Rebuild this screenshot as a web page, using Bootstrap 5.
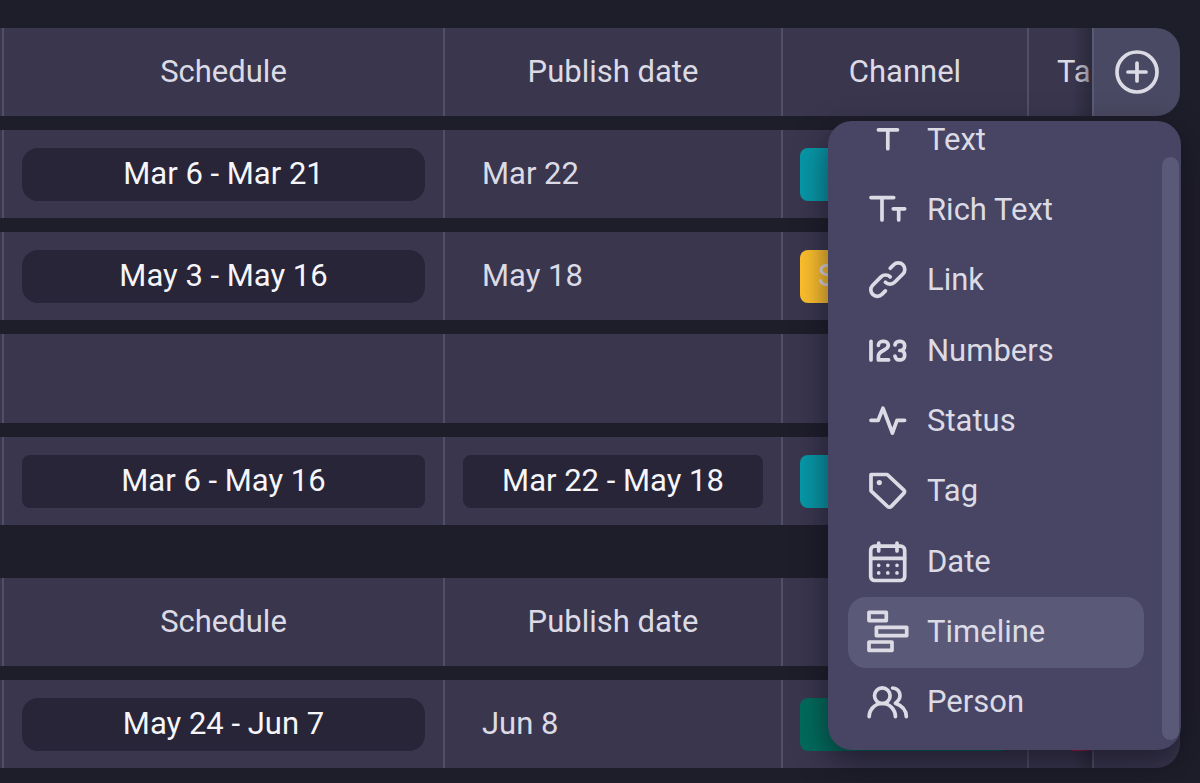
<!DOCTYPE html>
<html lang="en">
<head>
<meta charset="utf-8">
<meta name="viewport" content="width=device-width, initial-scale=1">
<title>Board</title>
<link href="https://cdn.jsdelivr.net/npm/bootstrap@5.3.0/dist/css/bootstrap.min.css" rel="stylesheet">
<style>
  body { background: #1e1d2a; color: #dcdbe5; font-family: Roboto, sans-serif; font-size: 31px; line-height: 36px; overflow-x: hidden; }
  .board { padding: 14px 20px 0 0; }
  .grid { width: 100%; table-layout: fixed; border-collapse: separate; border-spacing: 0 14px; }
  .grid + .grid { margin-top: 25px; }
  .grid th, .grid td { height: 88px; padding: 0 18px; background: #39364e; border-left: 2px solid #504e68; font-weight: 400; vertical-align: middle; white-space: nowrap; }
  .grid tr > :first-child { border-left: 0; padding: 0; }
  .grid .blank-row td { height: 89px; }
  .grid th { text-align: center; }
  .grid .plain { padding-left: 37px; }
  .c-edge { width: 2px; }
  .c-date { width: 338px; }
  .c-chan { width: 246px; }
  .c-tags { width: 65px; }
  .c-add { width: 88px; }
  .grid .under { position: relative; overflow: hidden; text-align: left; padding: 0 0 0 28px; }
  .grid .under::after { content: ""; position: absolute; inset: 0 0 0 auto; width: 20px; background: linear-gradient(to right, rgba(30,29,42,0), rgba(30,29,42,.5)); }
  .grid .pinned { position: relative; padding: 0; }
  .grid thead .pinned { background: #4a4963; border-color: #5b5a73; border-radius: 0 24px 24px 0; }
  .grid tbody .pinned { border-radius: 0 24px 24px 0; }
  .span-pill { height: 53px; line-height: 52px; border-radius: 16px; background: #272537; color: #f5f5fa; text-align: center; }
  .span-pill.total { border-radius: 8px; }
  .label-pill { height: 53px; line-height: 52px; border-radius: 8px; margin: 0 0 0 -1px; padding-left: 18px; }
  .teal { background: #0797a7; }
  .amber { background: #fcbf2d; }
  .green { background: #006b5b; }
  .red { background: #d31148; }
  .under .label-pill { margin-left: 9px; border-radius: 8px 0 0 8px; }
  .add-btn { height: 88px; color: #dcdbe5; }
  .type-menu { --bs-dropdown-bg: #474563; position: absolute; z-index: 10; top: calc(100% + 5px); right: -1px; width: 353px; height: 629px; padding: 0 37px 12px 20px; border: 0; border-radius: 24px; overflow: hidden; box-shadow: 0 12px 32px rgba(15,13,25,.6); color: #dcdbe5; font-size: 31px; }
  .type-list { height: 633px; flex: none; }
  .type-item { padding: 0 19px 1px; gap: 18px; border-radius: 18px; color: #dcdbe5; height: 100%; }
  .type-item:hover, .type-item.chosen { background: #5a5977; color: #dcdbe5; }
  .type-item svg { width: 42px; height: 42px; flex: none; overflow: visible; }
  .line-icon { fill: none; stroke: currentColor; stroke-width: 3.7; stroke-linecap: round; stroke-linejoin: round; }
  .scroll-thumb { position: absolute; top: 36px; right: 2px; bottom: 10px; width: 17px; border-radius: 9px; background: #5a5977; }
</style>
</head>
<body>
<main class="board">
  <table class="grid">
    <colgroup><col class="c-edge"><col><col class="c-date"><col class="c-chan"><col class="c-tags"><col class="c-add"></colgroup>
    <thead>
      <tr>
        <td></td><th>Schedule</th><th>Publish date</th><th>Channel</th><th class="under">Ta</th>
        <th class="pinned">
          <button type="button" class="btn border-0 p-0 w-100 d-flex align-items-center justify-content-center add-btn" aria-label="Add column">
            <svg class="line-icon" width="44" height="44" viewBox="0 0 44 44" stroke-width="4"><circle cx="22" cy="22" r="20"/><path d="M13 22H31M22 13V31"/></svg>
          </button>
          <div class="dropdown-menu d-flex flex-column justify-content-end type-menu">
            <ul class="list-unstyled d-flex flex-column mb-0 type-list">
              <li class="flex-fill"><button type="button" class="dropdown-item d-flex align-items-center type-item"><svg class="line-icon" viewBox="0 0 42 42"><path d="M11.4 10.8H30.5M20.8 11V29.7"/></svg>Text</button></li>
              <li class="flex-fill"><button type="button" class="dropdown-item d-flex align-items-center type-item"><svg class="line-icon" viewBox="0 0 42 42"><path d="M4 8.6H26.7M15 9V31M26.3 19.8H37.7M31.7 20V31"/></svg>Rich Text</button></li>
              <li class="flex-fill"><button type="button" class="dropdown-item d-flex align-items-center type-item"><svg class="line-icon" viewBox="0 0 42 42"><path d="M23.2 9.3L26.7 5.8A6.5 6.5 0 0 1 35.9 15L27.6 23.3A6.5 6.5 0 0 1 18.4 23.3"/><path transform="rotate(180 20.8 20.6)" d="M23.2 9.3L26.7 5.8A6.5 6.5 0 0 1 35.9 15L27.6 23.3A6.5 6.5 0 0 1 18.4 23.3"/></svg>Link</button></li>
              <li class="flex-fill"><button type="button" class="dropdown-item d-flex align-items-center type-item"><svg class="line-icon" viewBox="0 0 42 42"><path d="M4 11.3V29.9M11.4 15.3A4 4 0 0 1 15.4 11.3H17.3A4 4 0 0 1 21.3 15.3C21.3 21 11.4 20 11.4 26V29.9H21.6M28 15A4 4 0 0 1 32 11.3H33.6A4 4 0 0 1 37.6 15.3V16.5A4 4 0 0 1 33.6 20.5H32.8M33.6 20.5A4 4 0 0 1 37.6 24.5V25.9A4 4 0 0 1 33.6 29.9H32A4 4 0 0 1 28 26.2"/></svg>Numbers</button></li>
              <li class="flex-fill"><button type="button" class="dropdown-item d-flex align-items-center type-item"><svg class="line-icon" viewBox="0 0 42 42"><path d="M4 20.3H11.2L16 8.2L25.4 33L30 20.3H37.6"/></svg>Status</button></li>
              <li class="flex-fill"><button type="button" class="dropdown-item d-flex align-items-center type-item"><svg class="line-icon" viewBox="0 0 42 42"><path d="M4 4.5H20.2L36.6 19.8A2.6 2.6 0 0 1 36.7 23.4L24.3 36.4A2.6 2.6 0 0 1 20.6 36.5L4 20.8Z"/><circle cx="12.3" cy="12.6" r="2.6" fill="currentColor" stroke="none"/></svg>Tag</button></li>
              <li class="flex-fill"><button type="button" class="dropdown-item d-flex align-items-center type-item"><svg class="line-icon" viewBox="0 0 42 42"><rect x="3.7" y="5.2" width="34" height="34.3" rx="4"/><path d="M4 17.3H37.6M11.7 2.1V10M30 2.1V10"/><path d="M11.7 24.3h0M20.8 24.3h0M30 24.3h0M11.7 31.9h0M20.8 31.9h0M30 31.9h0"/></svg>Date</button></li>
              <li class="flex-fill"><button type="button" class="dropdown-item d-flex align-items-center type-item chosen"><svg class="line-icon" viewBox="0 0 42 42"><rect x="2" y="1.3" width="17.3" height="8.3"/><rect x="9.4" y="16.3" width="30.3" height="8.3"/><rect x="2" y="31" width="23" height="8.3"/></svg>Timeline</button></li>
              <li class="flex-fill"><button type="button" class="dropdown-item d-flex align-items-center type-item"><svg class="line-icon" viewBox="0 0 42 42"><circle cx="15.3" cy="14.7" r="7.8"/><path d="M2.2 35.6A13.1 13.1 0 0 1 28.4 35.6M25.6 7C30 7 33 10.4 33 14.6C33 18.4 31 20.4 28.4 22.2C35 24.6 39.3 29.6 39.3 35.6"/></svg>Person</button></li>
            </ul>
            <div class="scroll-thumb"></div>
          </div>
        </th>
      </tr>
    </thead>
    <tbody>
      <tr><td></td><td><div class="span-pill">Mar 6 - Mar 21</div></td><td class="plain">Mar 22</td><td><div class="label-pill teal"></div></td><td class="under"></td><td class="pinned"></td></tr>
      <tr><td></td><td><div class="span-pill">May 3 - May 16</div></td><td class="plain">May 18</td><td><div class="label-pill amber">S</div></td><td class="under"></td><td class="pinned"></td></tr>
      <tr class="blank-row"><td></td><td></td><td></td><td></td><td class="under"></td><td class="pinned"></td></tr>
      <tr><td></td><td><div class="span-pill total">Mar 6 - May 16</div></td><td><div class="span-pill total">Mar 22 - May 18</div></td><td><div class="label-pill teal"></div></td><td class="under"></td><td class="pinned"></td></tr>
    </tbody>
  </table>
  <table class="grid">
    <colgroup><col class="c-edge"><col><col class="c-date"><col class="c-chan"><col class="c-tags"><col class="c-add"></colgroup>
    <thead>
      <tr><td></td><th>Schedule</th><th>Publish date</th><th></th><th class="under"></th><th class="pinned"></th></tr>
    </thead>
    <tbody>
      <tr><td></td><td><div class="span-pill">May 24 - Jun 7</div></td><td class="plain">Jun 8</td><td><div class="label-pill green"></div></td><td class="under"><div class="label-pill red"></div></td><td class="pinned"></td></tr>
    </tbody>
  </table>
</main>
<script src="https://cdn.jsdelivr.net/npm/bootstrap@5.3.0/dist/js/bootstrap.bundle.min.js"></script>
</body>
</html>
